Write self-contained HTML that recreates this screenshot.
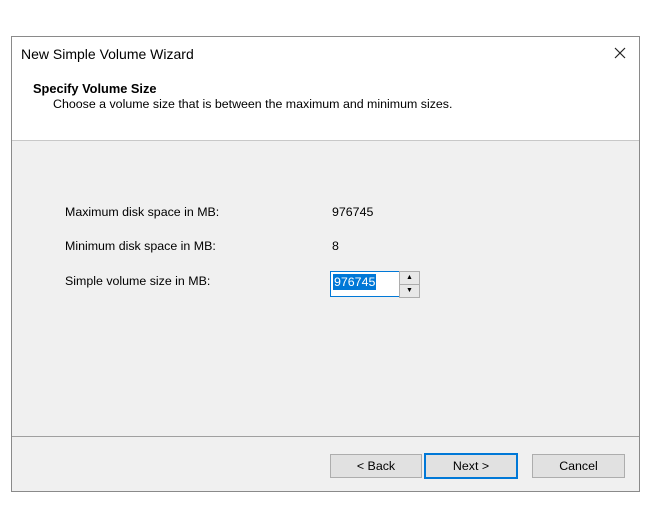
<!DOCTYPE html>
<html><head><style>
body{margin:0;width:645px;height:508px;background:#fff;position:relative;font-family:"Liberation Sans",sans-serif;font-size:12.4px;color:#000;overflow:hidden}
.a{position:absolute}
.win{left:11px;top:36px;width:627px;height:454px;border:1px solid #8a8a8a;background:#f0f0f0}
.btn{position:absolute;top:454px;height:22px;border:1px solid #adadad;background:#e1e1e1;text-align:center;line-height:22px;font-size:12.4px}
</style></head><body>
<div class="a win"></div>
<div class="a" style="left:12px;top:37px;width:627px;height:103px;background:#fff;border-bottom:1px solid #c8c8c8"></div>
<div class="a" style="left:21px;top:46px;font-size:14px">New Simple Volume Wizard</div>
<svg class="a" style="left:614px;top:47px" width="12" height="12"><path d="M1 1L11 11M11 1L1 11" stroke="#222" stroke-width="1.2"/></svg>
<div class="a" style="left:33px;top:81px;font-weight:bold;font-size:12.8px">Specify Volume Size</div>
<div class="a" style="left:53px;top:97px">Choose a volume size that is between the maximum and minimum sizes.</div>
<div class="a" style="left:65px;top:205px">Maximum disk space in MB:</div>
<div class="a" style="left:332px;top:205px">976745</div>
<div class="a" style="left:65px;top:239px">Minimum disk space in MB:</div>
<div class="a" style="left:332px;top:239px">8</div>
<div class="a" style="left:65px;top:274px">Simple volume size in MB:</div>
<div class="a" style="left:330px;top:271px;width:68px;height:24px;border:1px solid #0078d7;background:#fff"></div>
<div class="a" style="left:333px;top:274px;height:16px;line-height:16px;background:#0078d7;color:#fff;padding:0 1px">976745</div>
<div class="a" style="left:399px;top:271px;width:19px;height:12px;border:1px solid #adadad;background:#e8e8e8;font-size:7px;text-align:center;line-height:12px">▲</div>
<div class="a" style="left:399px;top:284px;width:19px;height:12px;border:1px solid #adadad;background:#e8e8e8;font-size:7px;text-align:center;line-height:12px">▼</div>
<div class="a" style="left:12px;top:436px;width:627px;height:1px;background:#a0a0a0"></div>
<div class="btn" style="left:330px;width:90px">&lt; Back</div>
<div class="btn" style="left:424px;width:90px;border:2px solid #0078d7;top:453px">Next &gt;</div>
<div class="btn" style="left:532px;width:91px">Cancel</div>
</body></html>
